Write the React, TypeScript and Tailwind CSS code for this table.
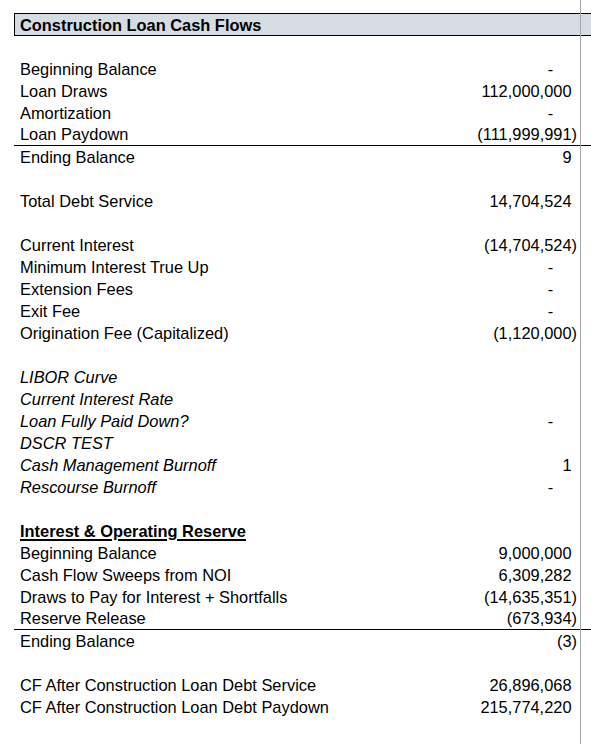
import React from 'react';

type Row = {
  label?: string;
  value?: string;
  style?: 'italic' | 'heading';
  rule?: boolean;
};

const rows: Row[] = [
  {},
  { label: 'Beginning Balance', value: '-' },
  { label: 'Loan Draws', value: '112,000,000' },
  { label: 'Amortization', value: '-' },
  { label: 'Loan Paydown', value: '(111,999,991)', rule: true },
  { label: 'Ending Balance', value: '9' },
  {},
  { label: 'Total Debt Service', value: '14,704,524' },
  {},
  { label: 'Current Interest', value: '(14,704,524)' },
  { label: 'Minimum Interest True Up', value: '-' },
  { label: 'Extension Fees', value: '-' },
  { label: 'Exit Fee', value: '-' },
  { label: 'Origination Fee (Capitalized)', value: '(1,120,000)' },
  {},
  { label: 'LIBOR Curve', style: 'italic' },
  { label: 'Current Interest Rate', style: 'italic' },
  { label: 'Loan Fully Paid Down?', value: '-', style: 'italic' },
  { label: 'DSCR TEST', style: 'italic' },
  { label: 'Cash Management Burnoff', value: '1', style: 'italic' },
  { label: 'Rescourse Burnoff', value: '-', style: 'italic' },
  {},
  { label: 'Interest & Operating Reserve', style: 'heading' },
  { label: 'Beginning Balance', value: '9,000,000' },
  { label: 'Cash Flow Sweeps from NOI', value: '6,309,282' },
  { label: 'Draws to Pay for Interest + Shortfalls', value: '(14,635,351)' },
  { label: 'Reserve Release', value: '(673,934)', rule: true },
  { label: 'Ending Balance', value: '(3)' },
  {},
  { label: 'CF After Construction Loan Debt Service', value: '26,896,068' },
  { label: 'CF After Construction Loan Debt Paydown', value: '215,774,220' },
];

// accounting format: positives leave room for ")", zero shows "-" padded by two digits
const Amount = ({ value }: { value: string }) => {
  if (value.startsWith('(')) return <>{value}</>;
  if (value === '-')
    return (
      <>
        -<span className="invisible">00)</span>
      </>
    );
  return (
    <>
      {value}
      <span className="invisible">)</span>
    </>
  );
};

export default function App() {
  return (
    <div
      className="relative w-[591px] h-[744px] overflow-hidden bg-white pl-[14px] pt-[13px] text-[16.4px] text-black"
      style={{ fontFamily: '"Liberation Sans", Arial, sans-serif' }}
    >
      {/* column gridline */}
      <div className="absolute left-[580px] top-0 bottom-0 w-px bg-[#a6a6a6]" />

      <div className="w-[577px]">
        <div className="flex items-end h-[23px] border-y border-l border-black bg-[#d6dce4] pl-[5px] font-bold leading-[20px]">
          Construction Loan Cash Flows
        </div>

        {rows.map((row, i) => (
          <div
            key={i}
            className={`flex items-end h-[22px] leading-[21px] ${row.rule ? 'border-b border-black' : ''}`}
          >
            <div
              className={`flex-1 pl-[6px] whitespace-nowrap ${row.style === 'italic' ? 'italic' : ''} ${
                row.style === 'heading' ? 'font-bold underline decoration-2 underline-offset-[2px]' : ''
              }`}
            >
              {row.label}
            </div>
            <div className="w-[160px] pr-[3px] text-right whitespace-nowrap">
              {row.value && <Amount value={row.value} />}
            </div>
            <div className="w-[11px]" />
          </div>
        ))}
      </div>
    </div>
  );
}
